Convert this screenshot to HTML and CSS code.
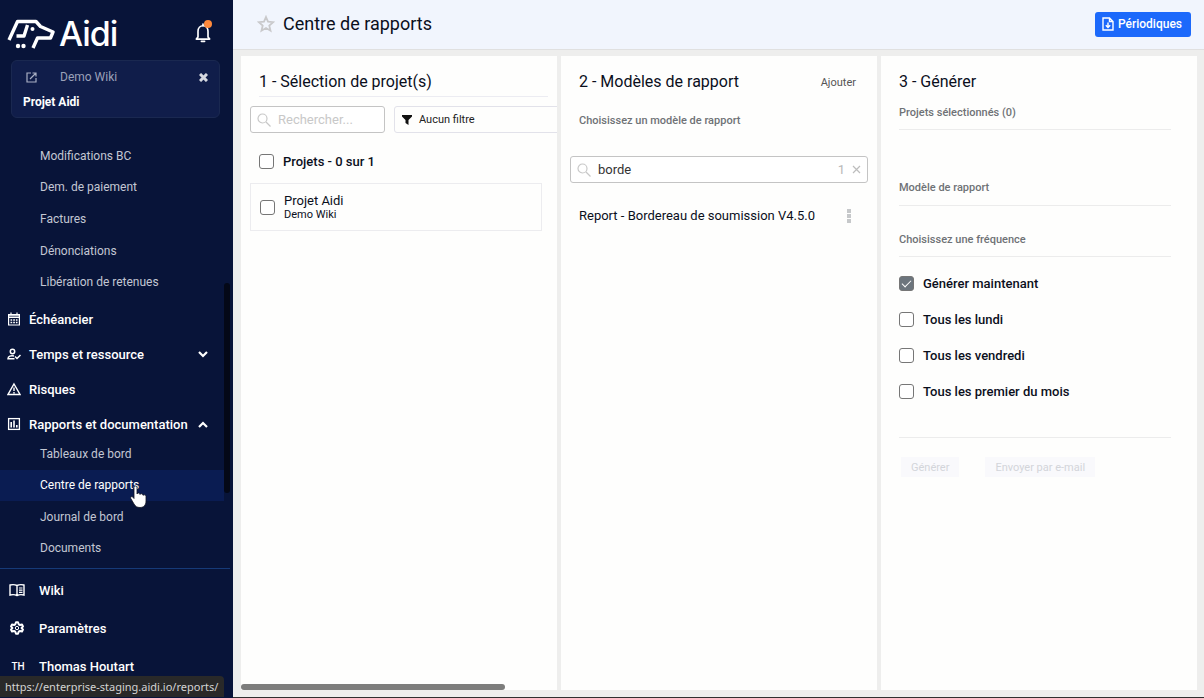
FILE: index.html
```html
<!DOCTYPE html>
<html lang="fr">
<head>
    <meta charset="UTF-8">
    <meta name="viewport" content="width=device-width, initial-scale=1.0">
    <title>Centre de rapports</title>
    <link rel="stylesheet" href="styles.css">
</head>
<body>
<aside class="sidebar">
    <div class="brand">
        <a href="#" class="logo">
            <svg width="48" height="32" viewBox="0 0 48 32" fill="none" stroke="#fff" stroke-width="3.4" stroke-linejoin="round">
                <path d="M2 22 L10.500 3.500 H29 L33.500 8.500 L46 14 L43.500 20 H30.500 L26 30"/>
                <path d="M20.500 7 L17 18 H9.500"/>
                <circle cx="25.500" cy="11" r="2" fill="#fff" stroke="none"/>
                <circle cx="11" cy="28" r="2.200" fill="#fff" stroke="none"/>
                <circle cx="16.500" cy="28" r="2.200" fill="#fff" stroke="none"/>
            </svg>
            <span>Aidi</span>
        </a>
        <button class="bell" aria-label="Notifications">
            <svg width="16" height="20" viewBox="0 0 14 18" fill="none" stroke="#fff" stroke-width="1.500" stroke-linejoin="round">
                <path d="M1 14.500 H13 L11.500 12.500 V7.500 C11.500 4.500 9.500 2.500 7 2.500 S2.500 4.500 2.500 7.500 V12.500 Z"/>
                <path d="M7 2.500 V1 M5.500 16.500 H8.500" stroke-linecap="round"/>
            </svg>
            <span class="dot"></span>
        </button>
    </div>

    <div class="project">
        <div class="project-top">
            <svg width="11" height="11" viewBox="0 0 11 11" fill="none" stroke="#a9b0c4" stroke-width="1.200"><path d="M5 1 H1 V10 H10 V6 M6.500 1 H10 V4.500 M10 1 L4 7"/></svg>
            <span>Demo Wiki</span>
            <button class="close" aria-label="Fermer">
                <svg width="9" height="9" viewBox="0 0 9 9" stroke="#d5d8e0" stroke-width="3"><path d="M1 1 L8 8 M8 1 L1 8"/></svg>
            </button>
        </div>
        <strong>Projet Aidi</strong>
    </div>

    <nav class="menu">
        <div class="sub sub-long">
            <a href="#">Modifications BC</a>
            <a href="#">Dem. de paiement</a>
            <a href="#">Factures</a>
            <a href="#">Dénonciations</a>
            <a href="#">Libération de retenues</a>
        </div>
        <a href="#" class="item">
            <svg width="14" height="14" viewBox="0 0 14 14" fill="none" stroke="#fff" stroke-width="1.200"><path d="M1.600 2.600 H12.400 V13 H1.600 Z M1.600 5.500 H12.400 M1.600 4 H12.400 M4 0.500 V3 M10 0.500 V3"/><path d="M3.500 8 H10.500 M3.500 10.500 H10.500" stroke-width="1.600" stroke-dasharray="1.700 1"/></svg>
            <span>Échéancier</span>
        </a>
        <a href="#" class="item">
            <svg width="14" height="14" viewBox="0 0 14 14" fill="none" stroke="#fff" stroke-width="1.500"><circle cx="5.500" cy="4.500" r="2.200"/><path d="M7 9 C4 8.200 1 9.300 1 11.700 H7.500 M8 9.500 L10 11.500 L13.500 8"/></svg>
            <span>Temps et ressource</span>
            <svg class="chevron" width="10" height="7" viewBox="0 0 10 7" fill="none" stroke="#fff" stroke-width="2.200"><path d="M1 1 L5 5 L9 1"/></svg>
        </a>
        <a href="#" class="item">
            <svg width="14" height="14" viewBox="0 0 14 14" fill="none" stroke="#fff" stroke-width="1.400"><path d="M7 2 L13 12.500 H1 Z M7 5.500 V9 M7 10 V11.500"/></svg>
            <span>Risques</span>
        </a>
        <a href="#" class="item">
            <svg width="14" height="14" viewBox="0 0 14 14" fill="none" stroke="#fff" stroke-width="1.300"><rect x="1.600" y="1.600" width="10.800" height="10.800"/><path d="M4.200 5 V10.500 M7 3.500 V10.500 M9.800 8 V10.500" stroke-width="1.600"/></svg>
            <span>Rapports et documentation</span>
            <svg class="chevron" width="10" height="7" viewBox="0 0 10 7" fill="none" stroke="#fff" stroke-width="2.200"><path d="M1 6 L5 2 L9 6"/></svg>
        </a>
        <div class="sub sub-short">
            <a href="#">Tableaux de bord</a>
            <a href="#" class="active">Centre de rapports</a>
            <a href="#">Journal de bord</a>
            <a href="#">Documents</a>
        </div>
        <div class="nav-thumb"></div>
    </nav>

    <div class="bottom">
        <a href="#">
            <svg width="16" height="14" viewBox="0 0 16 14" fill="none" stroke="#fff" stroke-width="1.400"><path d="M8 2.500 C6 1.500 3 1.500 1 2 V12 C3 11.500 6 11.500 8 12.500 C10 11.500 13 11.500 15 12 V2 C13 1.500 10 1.500 8 2.500 V12.500"/><path d="M10 5 H13.500 M10 7.200 H13.500 M10 9.400 H13.500" stroke-width="1.200"/></svg>
            <span>Wiki</span>
        </a>
        <a href="#">
            <svg width="16" height="16" viewBox="0 0 16 16" fill="none" stroke="#fff" stroke-width="2" stroke-linejoin="round"><path d="M7 2.200 H9 L9.700 4.300 L11 5 L13 4.600 L14 6.400 L12.600 8 L14 9.600 L13 11.400 L11 11 L9.700 11.700 L9 13.800 H7 L6.300 11.700 L5 11 L3 11.400 L2 9.600 L3.400 8 L2 6.400 L3 4.600 L5 5 L6.300 4.300 Z"/><circle cx="8" cy="8" r="1.700" stroke-width="1"/></svg>
            <span>Paramètres</span>
        </a>
        <a href="#">
            <span class="avatar">TH</span>
            <span>Thomas Houtart</span>
        </a>
    </div>
</aside>

<main>
    <header class="topbar">
        <button class="star" aria-label="Favori">
            <svg width="18" height="18" viewBox="0 0 18 18" fill="none" stroke="#c9c9cb" stroke-width="1.800"><path d="M9 2 L11 6.700 L16.200 7.200 L12.300 10.600 L13.500 15.700 L9 13 L4.500 15.700 L5.700 10.600 L1.800 7.200 L7 6.700 Z"/></svg>
        </button>
        <h1>Centre de rapports</h1>
        <button class="primary">
            <svg width="12" height="14" viewBox="0 0 12 14" fill="none" stroke="#fff" stroke-width="1.400"><path d="M1 1 H7.500 L11 4.500 V13 H1 Z M7.500 1 V4.500 H11 M6 5.500 V10.500 M3.800 8.300 L6 10.500 L8.200 8.300"/></svg>
            Périodiques
        </button>
    </header>

    <div class="columns">
        <section class="column">
            <h2 class="underlined">1 - Sélection de projet(s)</h2>
            <div class="filters">
                <label class="search small">
                    <svg width="14" height="14" viewBox="0 0 14 14" fill="none" stroke="#c8c8c8" stroke-width="1.200"><circle cx="5.500" cy="5.500" r="4.500"/><path d="M9 9 L13.500 13.500"/></svg>
                    <input type="text" placeholder="Rechercher..." aria-label="Rechercher un projet">
                </label>
                <button class="filter">
                    <svg width="10" height="10" viewBox="0 0 10 10" fill="#111"><path d="M0 0 H10 V1.500 L6.500 5 V10 L3.500 8 V5 L0 1.500 Z"/></svg>
                    Aucun filtre
                </button>
            </div>
            <label class="check all"><input type="checkbox"> Projets - 0 sur 1</label>
            <label class="card">
                <input type="checkbox">
                <span>Projet Aidi<small>Demo Wiki</small></span>
            </label>
        </section>

        <section class="column">
            <div class="head">
                <h2>2 - Modèles de rapport</h2>
                <button class="add">Ajouter</button>
            </div>
            <p class="hint model-hint">Choisissez un modèle de rapport</p>
            <label class="search">
                <svg width="14" height="14" viewBox="0 0 14 14" fill="none" stroke="#c8c8c8" stroke-width="1.200"><circle cx="5.500" cy="5.500" r="4.500"/><path d="M9 9 L13.500 13.500"/></svg>
                <input type="text" value="borde" aria-label="Rechercher un modèle">
                <span class="count">1</span>
                <button class="clear" aria-label="Effacer"><svg width="9" height="9" viewBox="0 0 9 9" stroke="#bdbdbd" stroke-width="1.200"><path d="M1 1 L8 8 M8 1 L1 8"/></svg></button>
            </label>
            <div class="report">
                <span>Report - Bordereau de soumission V4.5.0</span>
                <button aria-label="Options"><svg width="4" height="14" viewBox="0 0 4 14" fill="#c6c8ca"><path d="M0 0 H4 V4 H0 Z M0 5 H4 V9 H0 Z M0 10 H4 V14 H0 Z"/></svg></button>
            </div>
        </section>

        <section class="column generate">
            <h2>3 - Générer</h2>
            <p class="hint line">Projets sélectionnés (0)</p>
            <p class="hint line model">Modèle de rapport</p>
            <p class="hint line frequency">Choisissez une fréquence</p>
            <div class="choices">
                <label class="check"><input type="checkbox" checked> Générer maintenant</label>
                <label class="check"><input type="checkbox"> Tous les lundi</label>
                <label class="check"><input type="checkbox"> Tous les vendredi</label>
                <label class="check"><input type="checkbox"> Tous les premier du mois</label>
            </div>
            <div class="actions">
                <button disabled>Générer</button>
                <button disabled>Envoyer par e-mail</button>
            </div>
        </section>
        <div class="scroll-thumb"></div>
    </div>
</main>

<div class="status">https://enterprise-staging.aidi.io/reports/</div>
<svg class="cursor" width="18" height="24" viewBox="0 0 18 24" fill="#fff" stroke="#10131f" stroke-width="0.800"><path d="M4 2.500 C4 0.500 7 0.500 7 2.500 V9 C7.500 7.500 10 7.800 10 9.500 C10.500 8.200 13 8.500 13 10.300 C14 9.300 16 9.800 16 11.500 V16 C16 20.500 13.500 22.500 10 22.500 C7 22.500 5.500 21.500 4 19 L0.800 13.500 C0 11.800 2 10.800 3 12.200 L4 13.500 Z"/></svg>
</body>
</html>
```

FILE: styles.css
```css
* { box-sizing: border-box; }
body { margin: 0; display: flex; height: 100vh; overflow: hidden; font-family: Roboto, "Liberation Sans", sans-serif; font-size: 13px; color: #0b0f1c; }
a { color: inherit; text-decoration: none; }
button { font-family: inherit; font-size: 12px; padding: 0; border: 0; background: none; color: inherit; }
h1, h2, p { margin: 0; font-weight: 400; }
svg { flex-shrink: 0; }

/* sidebar */
.sidebar { width: 233px; flex-shrink: 0; display: flex; flex-direction: column; background: #081439; color: #fff; }
.brand { display: flex; justify-content: space-between; align-items: center; height: 60px; padding: 7px 21px 0 7px; }
.logo { display: flex; align-items: center; gap: 4px; }
.logo span { font-family: Inter, sans-serif; font-size: 34px; font-weight: 500; line-height: 40px; letter-spacing: -1px; }
.bell { position: relative; width: 18px; height: 22px; }
.dot { position: absolute; top: -3px; right: 0; width: 8px; height: 8px; border-radius: 50%; background: #ff8a3c; }
.project { margin: 0 13px 0 11px; height: 58px; padding: 8px 11px; border: 1px solid #1a2850; border-radius: 6px; background: #101d4a; }
.project-top { display: flex; align-items: center; height: 16px; padding-left: 3px; font-size: 12px; color: #9aa1b8; }
.project-top span { margin-left: 23px; }
.close { margin-left: auto; display: flex; }
.project strong { display: block; font-size: 12px; line-height: 16px; margin-top: 9px; }

.menu { position: relative; flex: 1; padding-top: 22px; overflow: hidden; }
.sub { display: grid; grid-auto-rows: 1fr; }
.sub-long { height: 158px; }
.sub-short { height: 126px; margin-top: 2px; }
.sub a { display: flex; align-items: center; margin-right: 9px; padding-left: 40px; font-size: 12px; color: #c3c7d3; }
.sub .active { background: #0a1c52; color: #fff; }
.item { display: flex; align-items: center; gap: 8px; height: 24px; margin-top: 11px; padding: 0 25px 0 7px; font-weight: 500; }
.sub-long + .item { margin-top: 9px; }
.chevron { margin-left: auto; }
.nav-thumb { position: absolute; right: 3px; top: 165px; width: 6px; height: 210px; border-radius: 3px; background: #040817; }

.bottom { height: 130px; margin-right: 3px; padding-top: 2px; border-top: 1px solid #163a78; font-weight: 500; }
.bottom a { display: flex; align-items: center; gap: 14px; height: 38px; padding-left: 9px; }
.avatar { width: 18px; margin-right: -2px; font-size: 10px; text-align: center; }

/* page */
main { flex: 1; min-width: 0; display: flex; flex-direction: column; background: #eeeeed; border-bottom: 1px solid #303030; }
.topbar { display: flex; align-items: center; height: 50px; padding: 0 13px 1px 24px; background: #f1f5fd; border-bottom: 1px solid #e0e0e0; }
.star { display: flex; }
h1 { margin-left: 8px; font-size: 18px; line-height: 24px; }
.primary { display: flex; align-items: center; gap: 4px; margin-left: auto; height: 25px; padding: 0 9px 0 7px; border-radius: 3px; background: #1c69fb; color: #fff; font-weight: 500; }
.columns { position: relative; flex: 1; min-height: 0; display: grid; grid-template-columns: repeat(3, minmax(0, 1fr)); gap: 4px; padding: 6px 7px 7px 8px; }
.column { overflow: hidden; padding: 14px 9px; background: #fefefd; }
.scroll-thumb { position: absolute; left: 8px; bottom: 7px; width: 264px; height: 6px; border-radius: 3px; background: #7d7d7c; }

h2 { padding-left: 9px; font-size: 16px; line-height: 24px; }
.underlined { position: relative; height: 27px; }
.underlined::after { content: ""; position: absolute; left: 9px; right: 0; bottom: 0; border-bottom: 1px solid #ececf2; }
.filters { display: flex; gap: 9px; margin-top: 9px; }
.search { display: flex; align-items: center; height: 27px; padding: 0 6px; border: 1px solid #c4c4c4; border-radius: 3px; background: #fff; }
.search.small { width: 135px; flex-shrink: 0; }
.search input { flex: 1; min-width: 0; margin-left: 7px; padding: 0; border: 0; outline: 0; background: none; font-family: inherit; font-size: 13px; color: #333; }
.search input::placeholder { color: #c8c8c8; }
.filter { flex: 0 0 200px; display: flex; align-items: center; gap: 7px; padding-left: 7px; border: 1px solid #e2e2ea; border-radius: 3px; font-size: 11px; color: #222; }

.check { display: flex; align-items: center; gap: 9px; padding-left: 9px; font-weight: 500; }
.check.all { height: 20px; margin-top: 18px; }
input[type="checkbox"] { position: relative; appearance: none; width: 15px; height: 15px; margin: 0; flex-shrink: 0; border: 1px solid #767676; border-radius: 3px; background: #fff; }
input[type="checkbox"]:checked { background: #6c757d; }
input[type="checkbox"]:checked::after { content: ""; position: absolute; left: 4px; top: 1px; width: 4px; height: 8px; border: solid #fff; border-width: 0 1px 1px 0; transform: rotate(45deg); }
.card { display: flex; align-items: center; gap: 9px; height: 48px; margin: 12px 6px 0 0; padding-left: 9px; border: 1px solid #ececef; line-height: 15px; }
.card small { display: block; font-size: 11px; line-height: 14px; }

.head { display: flex; align-items: center; justify-content: space-between; padding-right: 12px; }
.add { font-size: 11px; color: #555; }
.hint { font-size: 11px; line-height: 16px; font-weight: 500; color: #6f7276; }
.model-hint { margin: 19px 0 27px 9px; }
.count { color: #b8b8b8; }
.clear { display: flex; margin-left: 7px; }
.report { display: flex; align-items: center; justify-content: space-between; margin-top: 23px; padding: 0 17px 0 9px; line-height: 20px; }
.report button { display: flex; }

.generate { padding-right: 26px; }
.line { margin: 11px 0 0 9px; padding-bottom: 8px; border-bottom: 1px solid #ececec; }
.model { margin-top: 50px; padding-bottom: 9px; }
.frequency { margin-top: 26px; }
.choices { margin-left: 9px; padding: 8px 0 28px; border-bottom: 1px solid #ececec; }
.choices .check { height: 36px; padding-left: 0; }
.actions { display: flex; gap: 26px; margin: 19px 0 0 11px; }
.actions button { height: 20px; padding: 0 10px; background: #f9f9fc; font-size: 11px; color: #d3d5da; }

/* browser overlays */
.status { position: absolute; left: 0; bottom: 1px; height: 21px; padding: 0 6px 0 5px; border-radius: 0 4px 0 0; background: #292929; color: #d4d4d4; font-family: "Noto Sans", sans-serif; font-size: 11px; line-height: 21px; }
.cursor { position: absolute; left: 130px; top: 485px; }
```
